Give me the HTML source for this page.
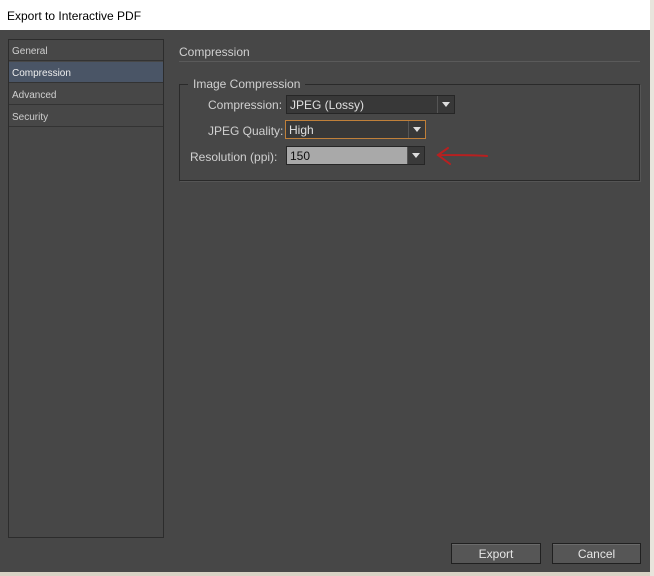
<!DOCTYPE html><html><head><style>
body{margin:0;width:654px;height:576px;overflow:hidden;background:#d8d2c4;font-family:"Liberation Sans",sans-serif;position:relative}
.a{position:absolute}
.t{font-size:12px;color:#000}
.lbl{color:#d0d0d0;font-size:12px}
.dd{position:absolute;height:17px;border:1px solid #262626;background:#383838;color:#e0e0e0;font-size:12px;line-height:18px;padding-left:3px;box-sizing:content-box}
.arr{position:absolute;right:0;top:0;width:16px;height:17px;border-left:1px solid #555}
.arr:after{content:"";position:absolute;left:4px;top:6px;border-left:4px solid transparent;border-right:4px solid transparent;border-top:5px solid #ddd}
.item{position:absolute;left:1px;width:154px;height:21px;border-bottom:1px solid #333;color:#cfcfcf;font-size:10px;line-height:23px;padding-left:3px;box-sizing:border-box}
.btn{position:absolute;top:543px;height:19px;border:1px solid #202020;background:#565656;color:#e6e6e6;font-size:12px;line-height:21px;text-align:center;box-shadow:inset 0 1px 0 #6a6a6a}
</style></head><body>
<div class="a" style="left:0;top:0;width:650px;height:30px;background:#fff"></div>
<div class="a t" style="left:7px;top:9px">Export to Interactive PDF</div>
<div class="a" style="left:650px;top:0;width:4px;height:576px;background:#e8e4dc"></div>
<div class="a" style="left:0;top:30px;width:650px;height:542px;background:#474747"></div>
<div class="a" style="left:8px;top:39px;width:154px;height:497px;border:1px solid #2c2c2c"></div>
<div class="item" style="left:9px;top:40px">General</div>
<div class="item" style="left:9px;top:62px;background:#4a5566;color:#eee">Compression</div>
<div class="item" style="left:9px;top:84px">Advanced</div>
<div class="item" style="left:9px;top:106px">Security</div>
<div class="a lbl" style="left:179px;top:45px">Compression</div>
<div class="a" style="left:179px;top:61px;width:461px;height:1px;background:#5a5a5a"></div>
<div class="a" style="left:179px;top:84px;width:459px;height:95px;border:1px solid #2a2a2a;box-shadow:1px 1px 0 #555"></div>
<div class="a lbl" style="left:188px;top:77px;background:#474747;padding:0 5px">Image Compression</div>
<div class="a lbl" style="left:208px;top:98px">Compression:</div>
<div class="dd" style="left:286px;top:95px;width:164px">JPEG (Lossy)<div class="arr"></div></div>
<div class="a lbl" style="left:208px;top:124px">JPEG Quality:</div>
<div class="dd" style="left:285px;top:120px;width:136px;border-color:#c0803a">High<div class="arr"></div></div>
<div class="a lbl" style="left:190px;top:150px">Resolution (ppi):</div>
<div class="dd" style="left:286px;top:146px;width:134px;background:#a9a9a9;color:#111">150<div class="arr" style="background:#3a3a3a"></div></div>
<svg class="a" style="left:434px;top:144px" width="60" height="24"><path d="M53 12 C40 11 25 11 7 11 M14 4 L4 11 L16 20" stroke="#b82020" stroke-width="2" fill="none" stroke-linecap="round"/></svg>
<div class="btn" style="left:451px;width:88px">Export</div>
<div class="btn" style="left:552px;width:87px">Cancel</div>
</body></html>
